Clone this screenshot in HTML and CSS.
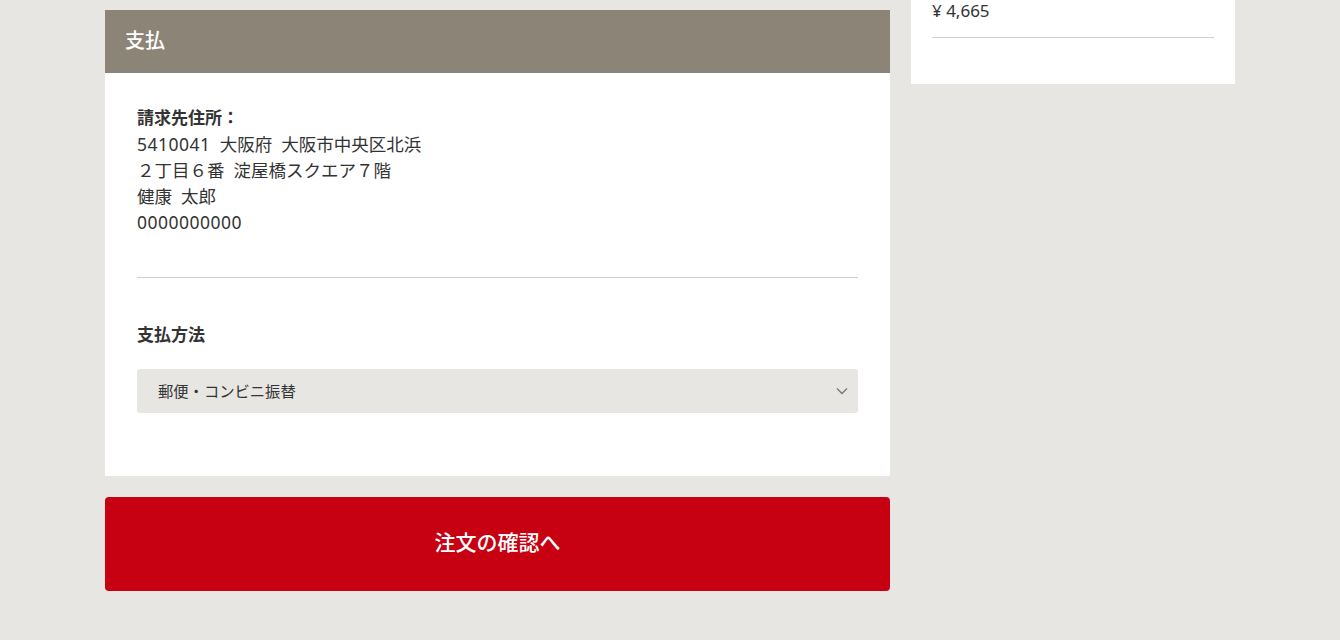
FILE: index.html
```html
<!DOCTYPE html>
<html lang="ja">
<head>
<meta charset="utf-8">
<link rel="stylesheet" href="styles.css">
</head>
<body>
<div class="page">
  <main class="main">
    <section class="panel">
      <h2 class="panel-head">支払</h2>
      <div class="panel-body">
        <div class="address">
          <div class="label">請求先住所：</div>
          <div><span class="num">5410041</span>&nbsp; 大阪府&nbsp; 大阪市中央区北浜</div>
          <div>２丁目６番&nbsp; 淀屋橋スクエア７階</div>
          <div>健康&nbsp; 太郎</div>
          <div><span class="num">0000000000</span></div>
        </div>
        <hr class="divider">
        <div class="label method-label">支払方法</div>
        <div class="select">
          <span>郵便・コンビニ振替</span>
          <svg class="chev" width="12" height="8" viewBox="0 0 12 8"><path d="M1 1.5 L6 6.5 L11 1.5" fill="none" stroke="#777" stroke-width="1.3"/></svg>
        </div>
      </div>
    </section>
    <button class="confirm">注文の確認へ</button>
  </main>
  <aside class="side">
    <div class="price">¥ 4,665</div>
    <hr class="side-line">
  </aside>
</div>
</body>
</html>
```

FILE: styles.css
```css
* { box-sizing: border-box; }
html, body { margin: 0; padding: 0; }
body {
  background: #e7e6e2;
  font-family: "Noto Sans", "Noto Sans CJK JP", sans-serif;
  color: #333;
  width: 1340px;
  height: 640px;
  overflow: hidden;
}
.page {
  display: flex;
  align-items: flex-start;
  gap: 21px;
  padding-left: 105px;
}
.main {
  width: 785px;
  margin-top: 10px;
  display: flex;
  flex-direction: column;
  gap: 21px;
}
.panel { background: #fff; }
.panel-head {
  margin: 0;
  height: 63px;
  background: #8c8477;
  color: #fff;
  font-size: 20px;
  font-weight: 500;
  line-height: 62px;
  padding-left: 20px;
}
.panel-body {
  padding: 32px 32px 63px 32px;
  font-size: 17.5px;
  line-height: 26px;
  font-weight: 400;
}
.num { letter-spacing: 0.5px; }
.label { font-weight: 700; font-size: 17px; }
.divider {
  border: 0;
  border-top: 1px solid #cfcfcf;
  margin: 42px 0 44px;
}
.method-label { margin-bottom: 21px; }
.select {
  height: 44px;
  background: #e7e6e2;
  border-radius: 3px;
  display: flex;
  align-items: center;
  justify-content: space-between;
  padding: 0 10px 0 21px;
  font-size: 15.3px;
  font-weight: 400;
}
.confirm {
  height: 94px;
  border: 0;
  border-radius: 4px;
  background: #c70012;
  color: #fff;
  font-family: inherit;
  font-size: 21px;
  font-weight: 500;
  padding-bottom: 8px;
}
.side {
  width: 324px;
  background: #fff;
  padding: 0 21px 46px;
}
.price {
  font-size: 17px;
  line-height: 22px;
  padding-bottom: 15px;
}
.side-line {
  border: 0;
  border-top: 1px solid #cfcfcf;
  margin: 0;
}
```
